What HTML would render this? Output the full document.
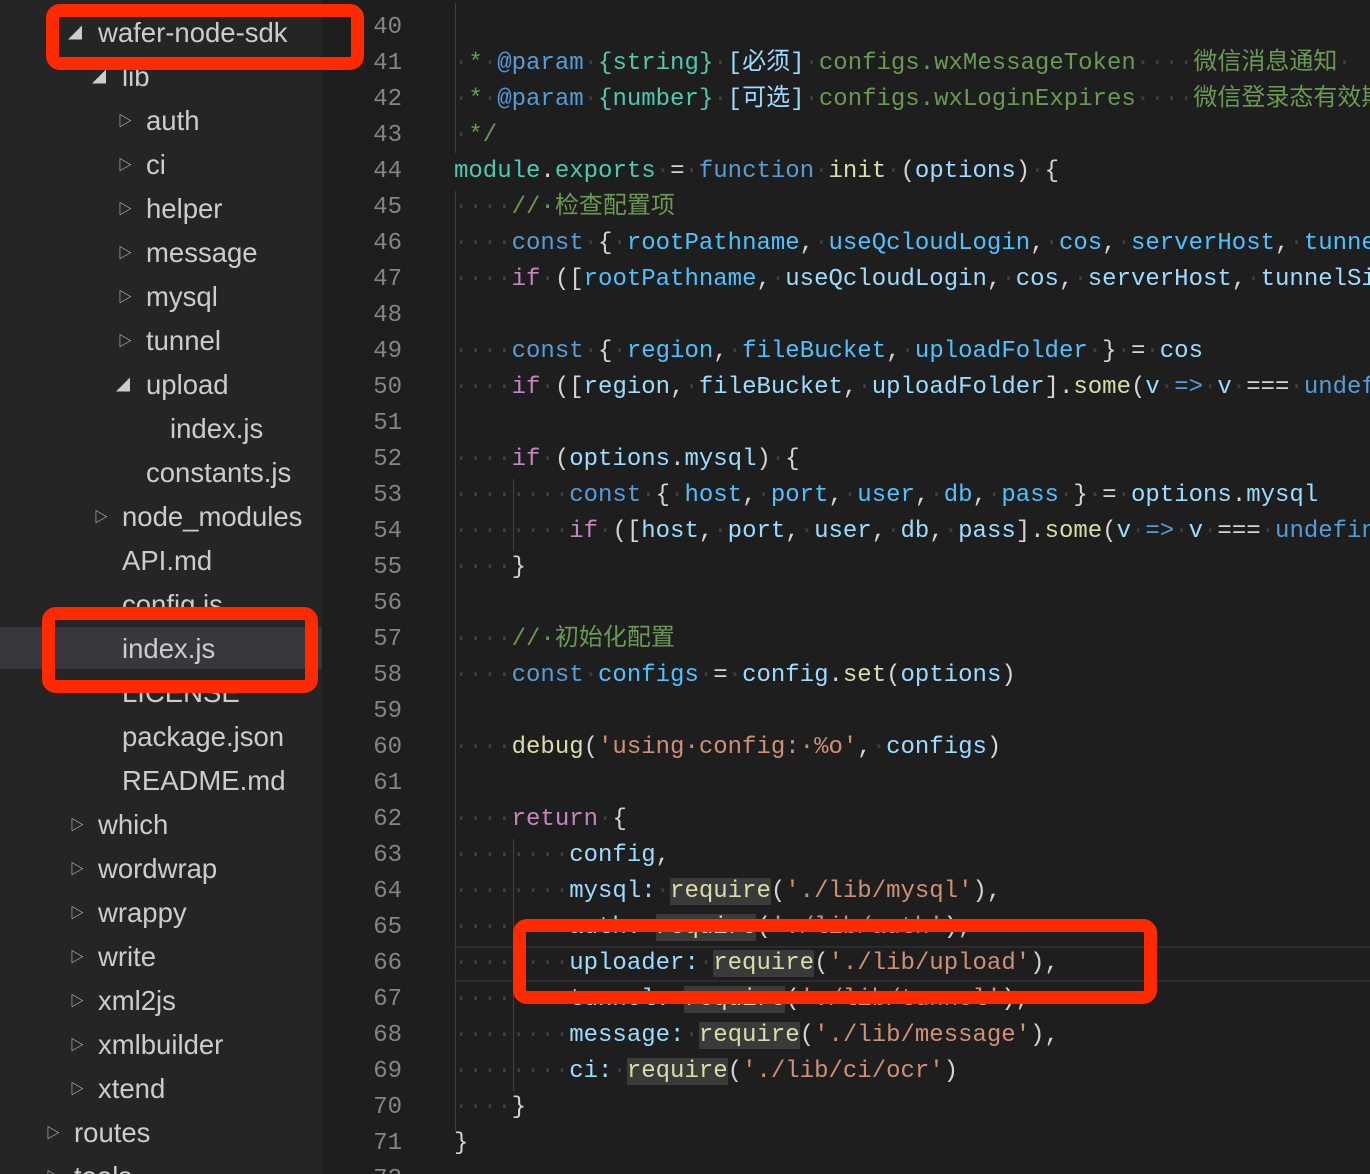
<!DOCTYPE html>
<html><head><meta charset="utf-8"><style>
*{margin:0;padding:0;box-sizing:border-box}
html,body{width:1370px;height:1174px;overflow:hidden}
body{background:#1e1e1e;position:relative;font-family:"Liberation Sans","Noto Sans CJK SC",sans-serif}
#side{position:absolute;left:0;top:0;width:322px;height:1174px;background:#252526;overflow:hidden}
.it{position:absolute;height:44px;line-height:44px;font-size:27.5px;color:#cccccc;white-space:nowrap}
.ar{position:absolute;font-size:14px;color:#cccccc;line-height:44px}
#sel{position:absolute;left:0;top:627px;width:322px;height:42px;background:#37373d}
.ln{position:absolute;left:350px;width:52px;text-align:right;font-family:"Liberation Mono",monospace;font-size:24px;color:#858585;height:36px;line-height:36px}
.cl{position:absolute;left:454px;font-family:"Liberation Mono","Noto Sans CJK SC",monospace;font-size:24px;height:36px;line-height:36px;white-space:pre;color:#d4d4d4}
.d{color:#404040}.k{color:#569cd6}.v{color:#9cdcfe}.f{color:#dcdcaa}.s{color:#ce9178}.c{color:#6a9955}.p{color:#c586c0}.n{color:#4fc1ff}.t{color:#4ec9b0}
.hl{background:#3a3a3a}
.red{position:absolute;border:13px solid #ff2a00;border-radius:14px}
.guide{position:absolute;width:1px;background:#404040}
#code{position:absolute;left:0;top:3px;width:1370px;height:1174px;overflow:hidden}
</style></head><body>
<div id="side">
<div id="sel"></div>
<span class="ar" style="left:68px;top:11px">◢</span><div class="it" style="left:98px;top:11px">wafer-node-sdk</div>
<span class="ar" style="left:92px;top:55px">◢</span><div class="it" style="left:122px;top:55px">lib</div>
<span class="ar" style="left:118px;top:99px">▷</span><div class="it" style="left:146px;top:99px">auth</div>
<span class="ar" style="left:118px;top:143px">▷</span><div class="it" style="left:146px;top:143px">ci</div>
<span class="ar" style="left:118px;top:187px">▷</span><div class="it" style="left:146px;top:187px">helper</div>
<span class="ar" style="left:118px;top:231px">▷</span><div class="it" style="left:146px;top:231px">message</div>
<span class="ar" style="left:118px;top:275px">▷</span><div class="it" style="left:146px;top:275px">mysql</div>
<span class="ar" style="left:118px;top:319px">▷</span><div class="it" style="left:146px;top:319px">tunnel</div>
<span class="ar" style="left:116px;top:363px">◢</span><div class="it" style="left:146px;top:363px">upload</div>
<div class="it" style="left:170px;top:407px">index.js</div>
<div class="it" style="left:146px;top:451px">constants.js</div>
<span class="ar" style="left:94px;top:495px">▷</span><div class="it" style="left:122px;top:495px">node_modules</div>
<div class="it" style="left:122px;top:539px">API.md</div>
<div class="it" style="left:122px;top:583px">config.js</div>
<div class="it" style="left:122px;top:627px">index.js</div>
<div class="it" style="left:122px;top:671px">LICENSE</div>
<div class="it" style="left:122px;top:715px">package.json</div>
<div class="it" style="left:122px;top:759px">README.md</div>
<span class="ar" style="left:70px;top:803px">▷</span><div class="it" style="left:98px;top:803px">which</div>
<span class="ar" style="left:70px;top:847px">▷</span><div class="it" style="left:98px;top:847px">wordwrap</div>
<span class="ar" style="left:70px;top:891px">▷</span><div class="it" style="left:98px;top:891px">wrappy</div>
<span class="ar" style="left:70px;top:935px">▷</span><div class="it" style="left:98px;top:935px">write</div>
<span class="ar" style="left:70px;top:979px">▷</span><div class="it" style="left:98px;top:979px">xml2js</div>
<span class="ar" style="left:70px;top:1023px">▷</span><div class="it" style="left:98px;top:1023px">xmlbuilder</div>
<span class="ar" style="left:70px;top:1067px">▷</span><div class="it" style="left:98px;top:1067px">xtend</div>
<span class="ar" style="left:46px;top:1111px">▷</span><div class="it" style="left:74px;top:1111px">routes</div>
<span class="ar" style="left:46px;top:1155px">▷</span><div class="it" style="left:74px;top:1155px">tools</div>
</div>

<div id="code">
<div class="ln" style="top:-29px">39</div><div class="ln" style="top:7px">40</div><div class="ln" style="top:43px">41</div><div class="ln" style="top:79px">42</div><div class="ln" style="top:115px">43</div><div class="ln" style="top:151px">44</div><div class="ln" style="top:187px">45</div><div class="ln" style="top:223px">46</div><div class="ln" style="top:259px">47</div><div class="ln" style="top:295px">48</div><div class="ln" style="top:331px">49</div><div class="ln" style="top:367px">50</div><div class="ln" style="top:403px">51</div><div class="ln" style="top:439px">52</div><div class="ln" style="top:475px">53</div><div class="ln" style="top:511px">54</div><div class="ln" style="top:547px">55</div><div class="ln" style="top:583px">56</div><div class="ln" style="top:619px">57</div><div class="ln" style="top:655px">58</div><div class="ln" style="top:691px">59</div><div class="ln" style="top:727px">60</div><div class="ln" style="top:763px">61</div><div class="ln" style="top:799px">62</div><div class="ln" style="top:835px">63</div><div class="ln" style="top:871px">64</div><div class="ln" style="top:907px">65</div><div class="ln" style="top:943px">66</div><div class="ln" style="top:979px">67</div><div class="ln" style="top:1015px">68</div><div class="ln" style="top:1051px">69</div><div class="ln" style="top:1087px">70</div><div class="ln" style="top:1123px">71</div><div class="ln" style="top:1159px">72</div>

<div class="guide" style="left:455px;top:0;height:150px"></div>
<div class="guide" style="left:455px;top:188px;height:940px"></div>
<div class="guide" style="left:513px;top:476px;height:72px"></div>
<div class="guide" style="left:513px;top:836px;height:252px"></div>
<div style="position:absolute;left:454px;top:943px;width:916px;height:36px;border-top:2px solid #2c2c2c;border-bottom:2px solid #2c2c2c"></div>

<div class="cl" style="top:-29px"><span class="d">·</span><span class="c">*</span><span class="d">·</span><span class="k">@param</span><span class="d">·</span><span class="t">{string}</span><span class="d">·</span><span class="c">[必须]</span><span class="d">·</span><span class="c">configs.rootPathname</span></div>
<div class="cl" style="top:43px"><span class="d">·</span><span class="c">*</span><span class="d">·</span><span class="k">@param</span><span class="d">·</span><span class="t">{string}</span><span class="d">·</span><span class="v">[必须]</span><span class="d">·</span><span class="c">configs.wxMessageToken</span><span class="d">····</span><span class="c">微信消息通知</span><span class="d">·</span></div>
<div class="cl" style="top:79px"><span class="d">·</span><span class="c">*</span><span class="d">·</span><span class="k">@param</span><span class="d">·</span><span class="t">{number}</span><span class="d">·</span><span class="v">[可选]</span><span class="d">·</span><span class="c">configs.wxLoginExpires</span><span class="d">····</span><span class="c">微信登录态有效期</span></div>
<div class="cl" style="top:115px"><span class="d">·</span><span class="c">*/</span></div>
<div class="cl" style="top:151px"><span class="t">module</span>.<span class="t">exports</span><span class="d">·</span>=<span class="d">·</span><span class="k">function</span><span class="d">·</span><span class="f">init</span><span class="d">·</span>(<span class="v">options</span>)<span class="d">·</span>{</div>
<div class="cl" style="top:187px"><span class="d">····</span><span class="c">//·检查配置项</span></div>
<div class="cl" style="top:223px"><span class="d">····</span><span class="k">const</span><span class="d">·</span>{<span class="d">·</span><span class="n">rootPathname</span>,<span class="d">·</span><span class="n">useQcloudLogin</span>,<span class="d">·</span><span class="n">cos</span>,<span class="d">·</span><span class="n">serverHost</span>,<span class="d">·</span><span class="n">tunnelSig</span></div>
<div class="cl" style="top:259px"><span class="d">····</span><span class="p">if</span><span class="d">·</span>([<span class="n">rootPathname</span>,<span class="d">·</span><span class="v">useQcloudLogin</span>,<span class="d">·</span><span class="v">cos</span>,<span class="d">·</span><span class="v">serverHost</span>,<span class="d">·</span><span class="v">tunnelSig</span></div>
<div class="cl" style="top:331px"><span class="d">····</span><span class="k">const</span><span class="d">·</span>{<span class="d">·</span><span class="n">region</span>,<span class="d">·</span><span class="n">fileBucket</span>,<span class="d">·</span><span class="n">uploadFolder</span><span class="d">·</span>}<span class="d">·</span>=<span class="d">·</span><span class="v">cos</span></div>
<div class="cl" style="top:367px"><span class="d">····</span><span class="p">if</span><span class="d">·</span>([<span class="v">region</span>,<span class="d">·</span><span class="v">fileBucket</span>,<span class="d">·</span><span class="v">uploadFolder</span>].<span class="f">some</span>(<span class="v">v</span><span class="d">·</span><span class="k">=&gt;</span><span class="d">·</span><span class="v">v</span><span class="d">·</span>===<span class="d">·</span><span class="k">undefi</span></div>
<div class="cl" style="top:439px"><span class="d">····</span><span class="p">if</span><span class="d">·</span>(<span class="v">options</span>.<span class="v">mysql</span>)<span class="d">·</span>{</div>
<div class="cl" style="top:475px"><span class="d">········</span><span class="k">const</span><span class="d">·</span>{<span class="d">·</span><span class="n">host</span>,<span class="d">·</span><span class="n">port</span>,<span class="d">·</span><span class="n">user</span>,<span class="d">·</span><span class="n">db</span>,<span class="d">·</span><span class="n">pass</span><span class="d">·</span>}<span class="d">·</span>=<span class="d">·</span><span class="v">options</span>.<span class="v">mysql</span></div>
<div class="cl" style="top:511px"><span class="d">········</span><span class="p">if</span><span class="d">·</span>([<span class="v">host</span>,<span class="d">·</span><span class="v">port</span>,<span class="d">·</span><span class="v">user</span>,<span class="d">·</span><span class="v">db</span>,<span class="d">·</span><span class="v">pass</span>].<span class="f">some</span>(<span class="v">v</span><span class="d">·</span><span class="k">=&gt;</span><span class="d">·</span><span class="v">v</span><span class="d">·</span>===<span class="d">·</span><span class="k">undefin</span></div>
<div class="cl" style="top:547px"><span class="d">····</span>}</div>
<div class="cl" style="top:619px"><span class="d">····</span><span class="c">//·初始化配置</span></div>
<div class="cl" style="top:655px"><span class="d">····</span><span class="k">const</span><span class="d">·</span><span class="n">configs</span><span class="d">·</span>=<span class="d">·</span><span class="v">config</span>.<span class="f">set</span>(<span class="v">options</span>)</div>
<div class="cl" style="top:727px"><span class="d">····</span><span class="f">debug</span>(<span class="s">'using·config:·%o'</span>,<span class="d">·</span><span class="v">configs</span>)</div>
<div class="cl" style="top:799px"><span class="d">····</span><span class="p">return</span><span class="d">·</span>{</div>
<div class="cl" style="top:835px"><span class="d">········</span><span class="v">config</span>,</div>
<div class="cl" style="top:871px"><span class="d">········</span><span class="v">mysql:</span><span class="d">·</span><span class="f hl">require</span>(<span class="s">'./lib/mysql'</span>),</div>
<div class="cl" style="top:907px"><span class="d">········</span><span class="v">auth:</span><span class="d">·</span><span class="f hl">require</span>(<span class="s">'./lib/auth'</span>),</div>
<div class="cl" style="top:943px"><span class="d">········</span><span class="v">uploader:</span><span class="d">·</span><span class="f hl">require</span>(<span class="s">'./lib/upload'</span>),</div>
<div class="cl" style="top:979px"><span class="d">········</span><span class="v">tunnel:</span><span class="d">·</span><span class="f hl">require</span>(<span class="s">'./lib/tunnel'</span>),</div>
<div class="cl" style="top:1015px"><span class="d">········</span><span class="v">message:</span><span class="d">·</span><span class="f hl">require</span>(<span class="s">'./lib/message'</span>),</div>
<div class="cl" style="top:1051px"><span class="d">········</span><span class="v">ci:</span><span class="d">·</span><span class="f hl">require</span>(<span class="s">'./lib/ci/ocr'</span>)</div>
<div class="cl" style="top:1087px"><span class="d">····</span>}</div>
<div class="cl" style="top:1123px">}</div>
</div>

<div class="red" style="left:46px;top:4px;width:318px;height:66px"></div>
<div class="red" style="left:42px;top:607px;width:276px;height:86px"></div>
<div class="red" style="left:513px;top:919px;width:644px;height:85px"></div>
</body></html>
